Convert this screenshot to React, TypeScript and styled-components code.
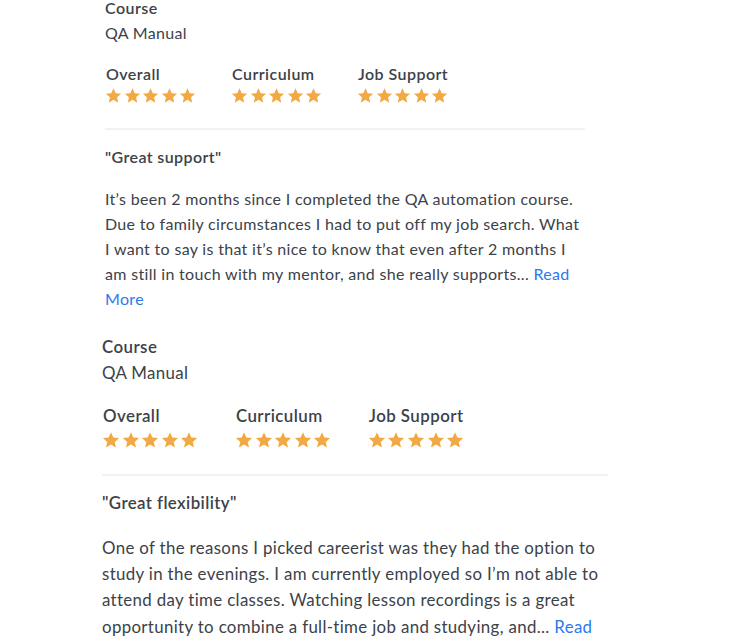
import styled, { createGlobalStyle } from "styled-components";

type Review = {
  course: string
  title: string
  text: string
  scale: number
  indent: number
}

const reviews: Review[] = [
  {
    course: "QA Manual",
    title: "\"Great support\"",
    text: "It’s been 2 months since I completed the QA automation course. Due to family circumstances I had to put off my job search. What I want to say is that it’s nice to know that even after 2 months I am still in touch with my mentor, and she really supports...",
    scale: 1,
    indent: 105,
  },
  {
    course: "QA Manual",
    title: "\"Great flexibility\"",
    text: "One of the reasons I picked careerist was they had the option to study in the evenings. I am currently employed so I’m not able to attend day time classes. Watching lesson recordings is a great opportunity to combine a full-time job and studying, and...",
    scale: 1.055,
    indent: 102,
  },
]

const categories = ["Overall", "Curriculum", "Job Support"]

function Star({ size }: { size: number }) {
  return (
    <svg width={size} height={size} viewBox="0 0 24 24" aria-hidden="true">
      <path
        fill="#f2a943"
        d="M12 1.6l3.1 7.1 7.7.7-5.8 5.1 1.7 7.6L12 18.1l-6.7 4 1.7-7.6-5.8-5.1 7.7-.7z"
      />
    </svg>
  )
}

function ReviewItem({ review, first }: { review: Review; first: boolean }) {
  const s = review.scale
  return (
    <Item $s={s} $indent={review.indent} $first={first}>
      <Label>Course</Label>
      <CourseName>{review.course}</CourseName>

      <Ratings $s={s}>
        {categories.map((c) => (
          <div key={c}>
            <Label>{c}</Label>
            <Stars $s={s}>
              {[0, 1, 2, 3, 4].map((i) => (
                <Star key={i} size={Math.round(17 * s)} />
              ))}
            </Stars>
          </div>
        ))}
      </Ratings>

      <Divider $s={s} />

      <Title $s={s}>{review.title}</Title>
      <Body $s={s}>
        {review.text} <a href="#">Read More</a>
      </Body>
    </Item>
  )
}

export default function App() {
  return (
    <>
      <GlobalStyle />
      <List>
        {reviews.map((r, i) => (
          <ReviewItem key={i} review={r} first={i === 0} />
        ))}
      </List>
    </>
  )
}

const GlobalStyle = createGlobalStyle`
  html, body {
    margin: 0;
    padding: 0;
    background: #ffffff;
  }
  body {
    font-family: Lato, "Noto Sans", sans-serif;
    color: #3c4249;
  }
`

const List = styled.div`
  display: flex;
  flex-direction: column;
  margin-top: -5px;
  overflow: hidden;
  height: 648px;
`

const Item = styled.div<{ $s: number; $indent: number; $first: boolean }>`
  padding-left: ${(p) => p.$indent}px;
  width: ${(p) => Math.round(480 * p.$s)}px;
  font-size: ${(p) => 16 * p.$s}px;
  line-height: ${(p) => 25 * p.$s}px;
  letter-spacing: ${(p) => 0.32 * p.$s}px;
  margin-top: ${(p) => (p.$first ? 0 : 23)}px;
`

const Label = styled.p`
  margin: 0;
  font-weight: 600;
  letter-spacing: 0.45px;
`

const CourseName = styled.p`
  margin: 0;
`

const Ratings = styled.div<{ $s: number }>`
  display: grid;
  grid-template-columns: repeat(3, ${(p) => 126 * p.$s}px);
  margin-top: ${(p) => 15.5 * p.$s}px;
  padding-left: 1px;
`

const Stars = styled.div<{ $s: number }>`
  display: flex;
  gap: ${(p) => 1.5 * p.$s}px;
  height: ${(p) => 18 * p.$s}px;
  margin-top: ${(p) => 1.2 * p.$s}px;
  margin-left: -1px;
  align-items: center;
`

const Divider = styled.hr<{ $s: number }>`
  border: none;
  height: 2px;
  background: #f2f2f2;
  margin: ${(p) => 23.5 * p.$s}px 0 0;
`

const Title = styled.h3<{ $s: number }>`
  margin: ${(p) => 13.5 * p.$s}px 0 0;
  font-size: inherit;
  font-weight: 600;
  letter-spacing: 0.4px;
`

const Body = styled.p<{ $s: number }>`
  margin: ${(p) => 17 * p.$s}px 0 0;

  a {
    color: #2a7af0;
    text-decoration: none;
  }
`
